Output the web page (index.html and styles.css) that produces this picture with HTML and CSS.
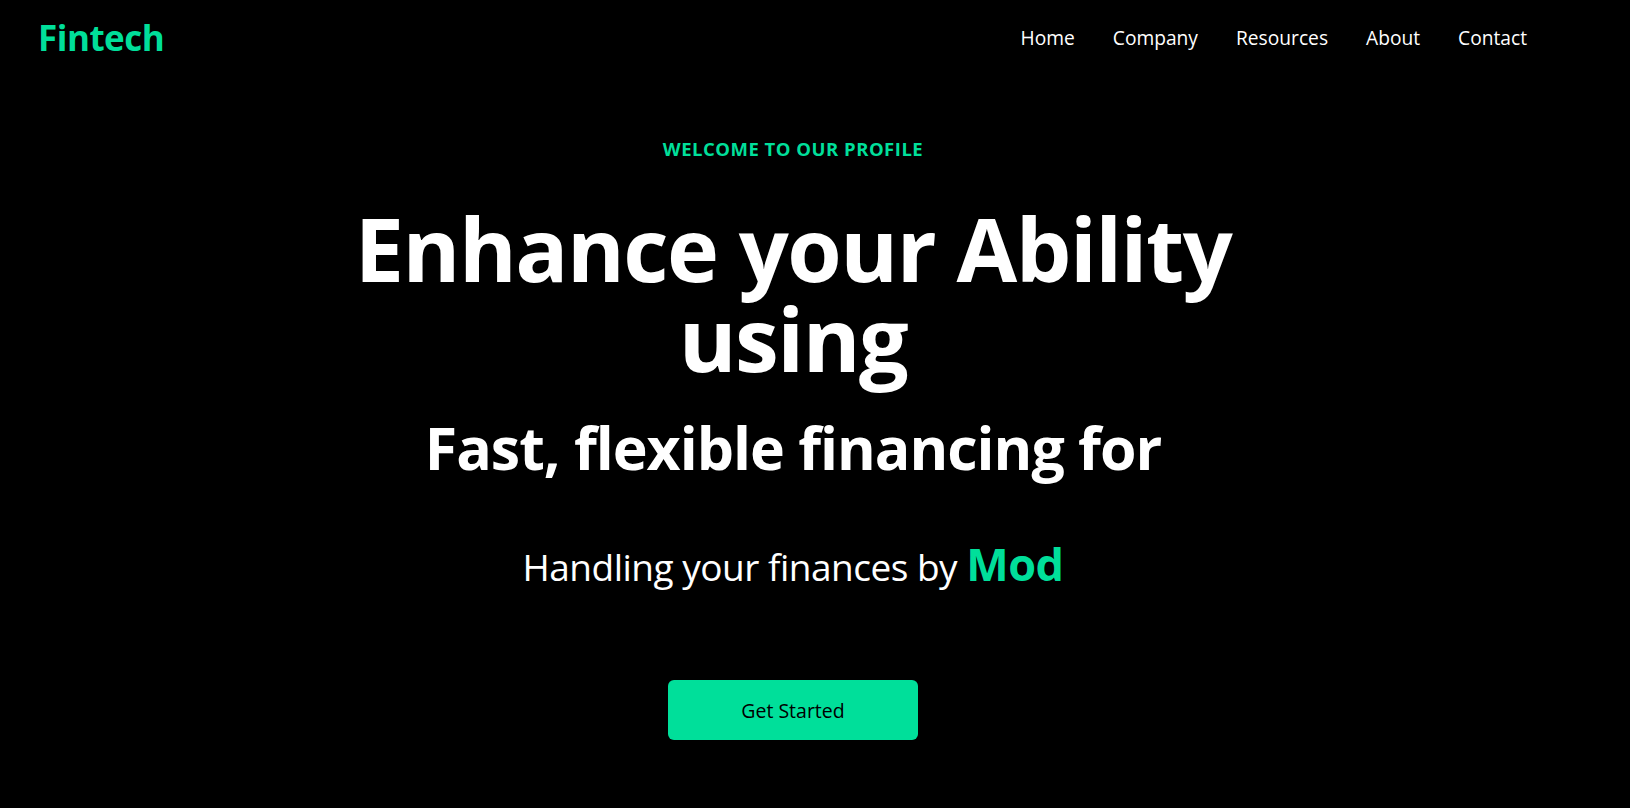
FILE: index.html
```html
<!DOCTYPE html>
<html lang="en">
<head>
<meta charset="utf-8">
<title>Fintech</title>
<link rel="stylesheet" href="styles.css">
</head>
<body>
  <header class="topbar">
    <div class="logo">Fintech</div>
    <nav>
      <ul class="nav-list">
        <li>Home</li>
        <li>Company</li>
        <li>Resources</li>
        <li>About</li>
        <li>Contact</li>
      </ul>
    </nav>
  </header>
  <main class="hero">
    <p class="eyebrow">WELCOME TO OUR PROFILE</p>
    <h1 class="title">Enhance your Ability<br>using</h1>
    <p class="subtitle">Fast, flexible financing for</p>
    <p class="tagline">Handling your finances by <span class="typed">Mod</span></p>
    <button class="cta">Get Started</button>
  </main>
</body>
</html>
```

FILE: styles.css
```css
* { box-sizing: border-box; }
html, body {
  margin: 0;
  padding: 0;
  background: #000;
  color: #fff;
  font-family: "Open Sans", "Noto Sans", sans-serif;
  height: 100%;
}
.topbar {
  display: flex;
  justify-content: space-between;
  align-items: center;
  height: 74px;
  padding: 0 103px 0 38px;
}
.logo {
  color: #00df9a;
  font-weight: 700;
  font-size: 35px;
  line-height: 1;
  letter-spacing: -0.5px;
}
.nav-list {
  display: flex;
  gap: 38px;
  list-style: none;
  margin: 0;
  padding: 0;
  font-size: 19.2px;
  letter-spacing: 0;
}
.hero {
  display: flex;
  flex-direction: column;
  align-items: center;
  text-align: center;
  padding-right: 44px;
}
.eyebrow {
  margin: 60px 0 0;
  color: #00df9a;
  font-weight: 700;
  font-size: 18.5px;
  line-height: 30px;
  letter-spacing: 0.5px;
}
.title {
  margin: 39px 0 0;
  font-size: 88px;
  font-weight: 700;
  line-height: 90px;
  letter-spacing: -1.5px;
}
.subtitle {
  margin: 19px 0 0;
  font-size: 59px;
  font-weight: 700;
  line-height: 90px;
  letter-spacing: -1px;
}
.tagline {
  margin: 42px 0 0;
  font-size: 37px;
  font-weight: 400;
  line-height: 60px;
  letter-spacing: -0.5px;
}
.typed {
  color: #00df9a;
  font-weight: 700;
  font-size: 45px;
}
.cta {
  margin-top: 83px;
  width: 250px;
  height: 60px;
  border: 0;
  border-radius: 6px;
  background: #00df9a;
  color: #000;
  font-family: inherit;
  font-size: 19.5px;
  font-weight: 500;
}
```
